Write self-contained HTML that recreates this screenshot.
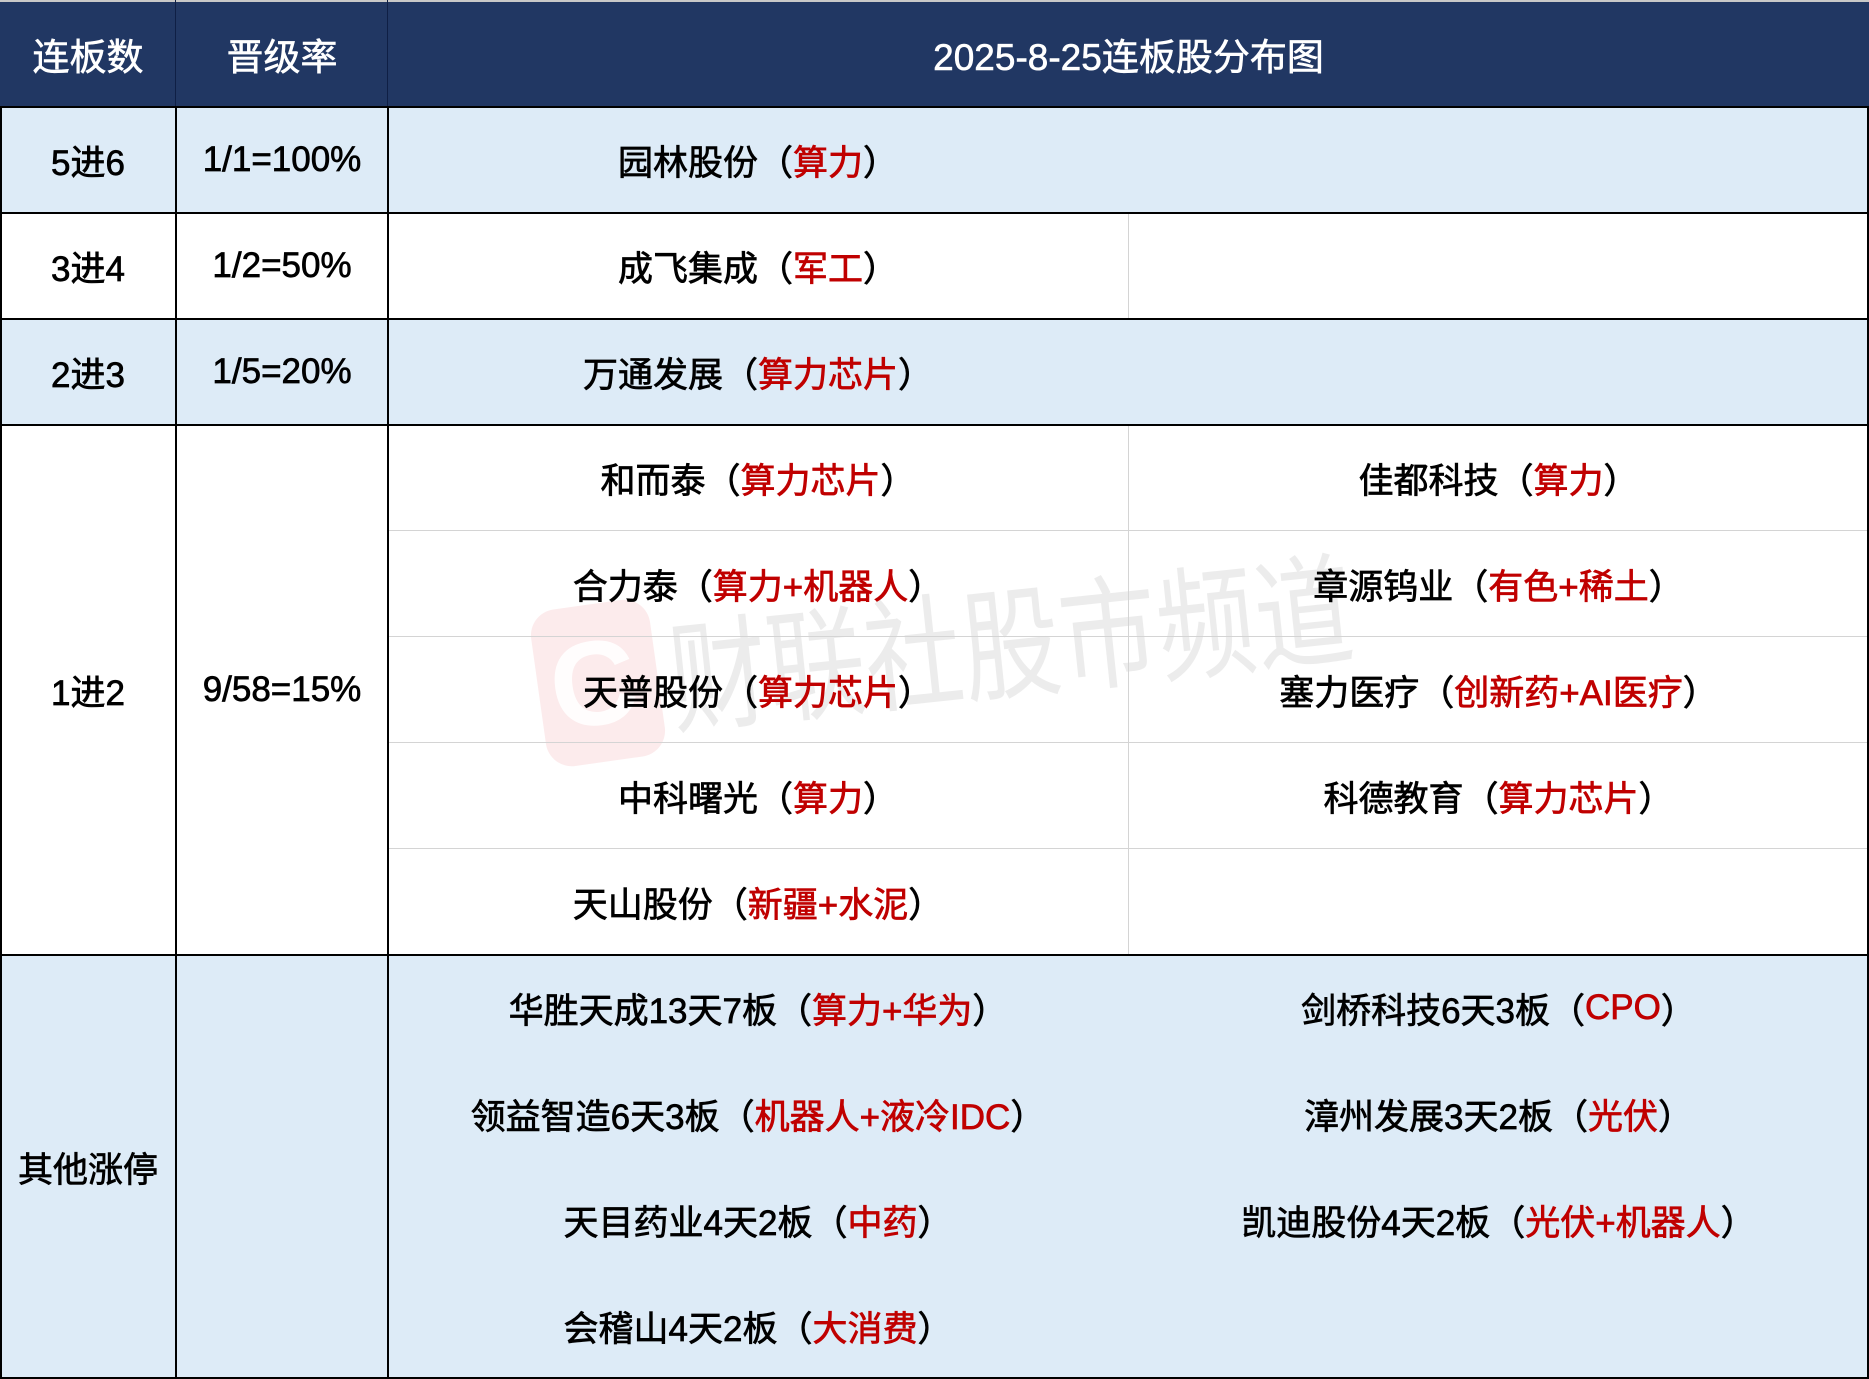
<!DOCTYPE html>
<html><head><meta charset="utf-8">
<style>
*{margin:0;padding:0;box-sizing:border-box}
body{width:1869px;height:1379px;position:relative;background:#fff;overflow:hidden;font-family:"Liberation Sans","Noto Sans CJK SC",sans-serif;color:#000}
.bg{position:absolute}
.h{position:absolute;background:#000}
.g{position:absolute;background:#d4d4d4}
.t{position:absolute;display:flex;align-items:center;justify-content:center;font-size:35px;white-space:nowrap;-webkit-text-stroke:0.7px #000}
.t.w{color:#fff;font-size:37px;-webkit-text-stroke:0.6px #fff}
.r{color:#c00000;-webkit-text-stroke:0.7px #c00000}
</style></head><body>
<div class="bg" style="left:0;top:0;width:1869px;height:106px;background:#213763"></div>
<div class="bg" style="left:0;top:106px;width:1869px;height:106px;background:#ddebf7"></div>
<div class="bg" style="left:0;top:318px;width:1869px;height:106px;background:#ddebf7"></div>
<div class="bg" style="left:0;top:954px;width:1869px;height:425px;background:#ddebf7"></div>
<div class="bg" style="left:0;top:0;width:1869px;height:2px;background:#c8c8c8"></div>

<!-- watermark -->
<div style="position:absolute;left:538px;top:604px;width:120px;height:158px;border-radius:26px;background:rgba(230,60,70,0.1);transform:rotate(-8deg)"></div>
<div style="position:absolute;left:550px;top:618px;width:100px;height:130px;font-size:120px;line-height:130px;color:rgba(255,255,255,0.9);font-family:'Liberation Sans',sans-serif;font-weight:bold;transform:rotate(-8deg)">C</div>
<div style="position:absolute;left:669px;top:612px;font-size:98px;line-height:120px;color:rgba(0,0,0,0.075);transform:rotate(-6deg) scaleY(1.25);transform-origin:left center;white-space:nowrap;font-family:'Noto Sans CJK SC',sans-serif">财联社股市频道</div>

<div class="g" style="left:1128px;top:212px;width:1px;height:106px"></div>
<div class="g" style="left:1128px;top:424px;width:1px;height:530px"></div>
<div class="g" style="left:387px;top:530px;width:1482px;height:1px"></div>
<div class="g" style="left:387px;top:636px;width:1482px;height:1px"></div>
<div class="g" style="left:387px;top:742px;width:1482px;height:1px"></div>
<div class="g" style="left:387px;top:848px;width:1482px;height:1px"></div>

<div class="h" style="left:0;top:106px;width:1869px;height:2px"></div>
<div class="h" style="left:0;top:212px;width:1869px;height:2px"></div>
<div class="h" style="left:0;top:318px;width:1869px;height:2px"></div>
<div class="h" style="left:0;top:424px;width:1869px;height:2px"></div>
<div class="h" style="left:0;top:954px;width:1869px;height:2px"></div>
<div class="h" style="left:0;top:1377px;width:1869px;height:2px"></div>
<div class="h" style="left:0;top:106px;width:2px;height:1273px"></div>
<div class="h" style="left:1867px;top:106px;width:2px;height:1273px"></div>
<div class="h" style="left:175px;top:106px;width:2px;height:1273px"></div>
<div class="h" style="left:387px;top:106px;width:2px;height:1273px"></div>
<div class="bg" style="left:175px;top:0;width:1px;height:106px;background:#0f1f45"></div>
<div class="bg" style="left:387px;top:0;width:1px;height:106px;background:#0f1f45"></div>

<div class="t w" style="left:0;top:0;width:176px;height:108px">连板数</div>
<div class="t w" style="left:176px;top:0;width:212px;height:108px">晋级率</div>
<div class="t w" style="left:388px;top:0;width:1481px;height:108px">2025-8-25连板股分布图</div>

<div class="t" style="left:0;top:107px;width:176px;height:106px">5进6</div>
<div class="t" style="left:176px;top:107px;width:212px;height:106px">1/1=100%</div>
<div class="t" style="left:0;top:213px;width:176px;height:106px">3进4</div>
<div class="t" style="left:176px;top:213px;width:212px;height:106px">1/2=50%</div>
<div class="t" style="left:0;top:319px;width:176px;height:106px">2进3</div>
<div class="t" style="left:176px;top:319px;width:212px;height:106px">1/5=20%</div>
<div class="t" style="left:0;top:425px;width:176px;height:530px">1进2</div>
<div class="t" style="left:176px;top:425px;width:212px;height:530px">9/58=15%</div>
<div class="t" style="left:0;top:955px;width:176px;height:424px">其他涨停</div>

<div class="t" style="left:388px;top:107px;width:740px;height:106px">园林股份（<span class="r">算力</span>）</div>
<div class="t" style="left:388px;top:213px;width:740px;height:106px">成飞集成（<span class="r">军工</span>）</div>
<div class="t" style="left:388px;top:319px;width:740px;height:106px">万通发展（<span class="r">算力芯片</span>）</div>
<div class="t" style="left:388px;top:425px;width:740px;height:106px">和而泰（<span class="r">算力芯片</span>）</div>
<div class="t" style="left:388px;top:531px;width:740px;height:106px">合力泰（<span class="r">算力+机器人</span>）</div>
<div class="t" style="left:388px;top:637px;width:740px;height:106px">天普股份（<span class="r">算力芯片</span>）</div>
<div class="t" style="left:388px;top:743px;width:740px;height:106px">中科曙光（<span class="r">算力</span>）</div>
<div class="t" style="left:388px;top:849px;width:740px;height:106px">天山股份（<span class="r">新疆+水泥</span>）</div>
<div class="t" style="left:388px;top:955px;width:740px;height:106px">华胜天成13天7板（<span class="r">算力+华为</span>）</div>
<div class="t" style="left:388px;top:1061px;width:740px;height:106px">领益智造6天3板（<span class="r">机器人+液冷IDC</span>）</div>
<div class="t" style="left:388px;top:1167px;width:740px;height:106px">天目药业4天2板（<span class="r">中药</span>）</div>
<div class="t" style="left:388px;top:1273px;width:740px;height:106px">会稽山4天2板（<span class="r">大消费</span>）</div>

<div class="t" style="left:1129px;top:425px;width:739px;height:106px">佳都科技（<span class="r">算力</span>）</div>
<div class="t" style="left:1129px;top:531px;width:739px;height:106px">章源钨业（<span class="r">有色+稀土</span>）</div>
<div class="t" style="left:1129px;top:637px;width:739px;height:106px">塞力医疗（<span class="r">创新药+AI医疗</span>）</div>
<div class="t" style="left:1129px;top:743px;width:739px;height:106px">科德教育（<span class="r">算力芯片</span>）</div>
<div class="t" style="left:1129px;top:955px;width:739px;height:106px">剑桥科技6天3板（<span class="r">CPO</span>）</div>
<div class="t" style="left:1129px;top:1061px;width:739px;height:106px">漳州发展3天2板（<span class="r">光伏</span>）</div>
<div class="t" style="left:1129px;top:1167px;width:739px;height:106px">凯迪股份4天2板（<span class="r">光伏+机器人</span>）</div>
</body></html>
